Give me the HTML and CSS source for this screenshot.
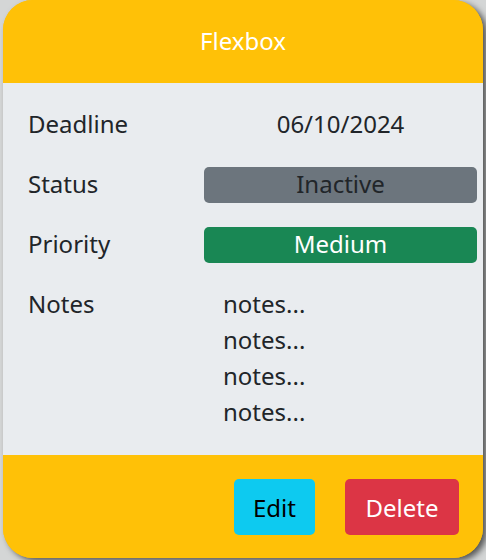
FILE: index.html
```html
<!DOCTYPE html>
<html>
<head>
<meta charset="utf-8">
<link rel="stylesheet" href="styles.css">
</head>
<body>
<div class="card">
  <div class="card-header">Flexbox</div>
  <div class="card-body">
    <div class="row">
      <div class="label">Deadline</div>
      <div class="value center">06/10/2024</div>
    </div>
    <div class="row">
      <div class="label">Status</div>
      <div class="value badge inactive">Inactive</div>
    </div>
    <div class="row">
      <div class="label">Priority</div>
      <div class="value badge medium">Medium</div>
    </div>
    <div class="row">
      <div class="label">Notes</div>
      <div class="value notes">
        <div>notes...</div>
        <div>notes...</div>
        <div>notes...</div>
        <div>notes...</div>
      </div>
    </div>
  </div>
  <div class="card-footer">
    <button class="btn btn-edit">Edit</button>
    <button class="btn btn-delete">Delete</button>
  </div>
</div>
</body>
</html>
```
FILE: styles.css
```css
html, body {
  margin: 0;
  padding: 0;
}
body {
  background: #d4d6d6;
  font-family: "Noto Sans", sans-serif;
  color: #212529;
  width: 486px;
  height: 560px;
  overflow: hidden;
}
.card {
  margin-left: 3px;
  width: 480px;
  height: 558px;
  border-radius: 30px;
  overflow: hidden;
  display: flex;
  flex-direction: column;
  box-shadow: 4px 3px 6px rgba(0, 0, 0, 0.6);
  background: #ffc107;
}
.card-header {
  height: 83px;
  box-sizing: border-box;
  padding-bottom: 3px;
  display: flex;
  align-items: center;
  justify-content: center;
  color: #fff;
  font-size: 24px;
  background: #ffc107;
}
.card-body {
  background: #e9ecef;
  padding: 24px 6px 24px 25px;
  display: flex;
  flex-direction: column;
  gap: 24px;
}
.row {
  display: grid;
  grid-template-columns: 176px 1fr;
}
.label,
.value {
  font-size: 24px;
  line-height: 34px;
  padding-bottom: 2px;
  white-space: nowrap;
}
.center {
  text-align: center;
}
.badge {
  text-align: center;
  border-radius: 5px;
  height: 36px;
  box-sizing: border-box;
}
.inactive {
  background: #6c757d;
  color: #212529;
}
.medium {
  background: #198754;
  color: #fff;
}
.notes {
  padding-left: 19px;
  padding-bottom: 0;
}
.notes div {
  line-height: 34px;
  padding-bottom: 2px;
}
.card-footer {
  flex: 1;
  background: #ffc107;
  display: flex;
  justify-content: flex-end;
  align-items: flex-start;
  gap: 30px;
  padding: 24px 24px 0 0;
}
.btn {
  border: none;
  border-radius: 5px;
  height: 56px;
  font-family: "Noto Sans", sans-serif;
  font-size: 24px;
  padding: 0;
}
.btn-edit {
  background: #0dcaf0;
  color: #000;
  width: 81px;
}
.btn-delete {
  background: #dc3545;
  color: #fff;
  width: 114px;
}
```
